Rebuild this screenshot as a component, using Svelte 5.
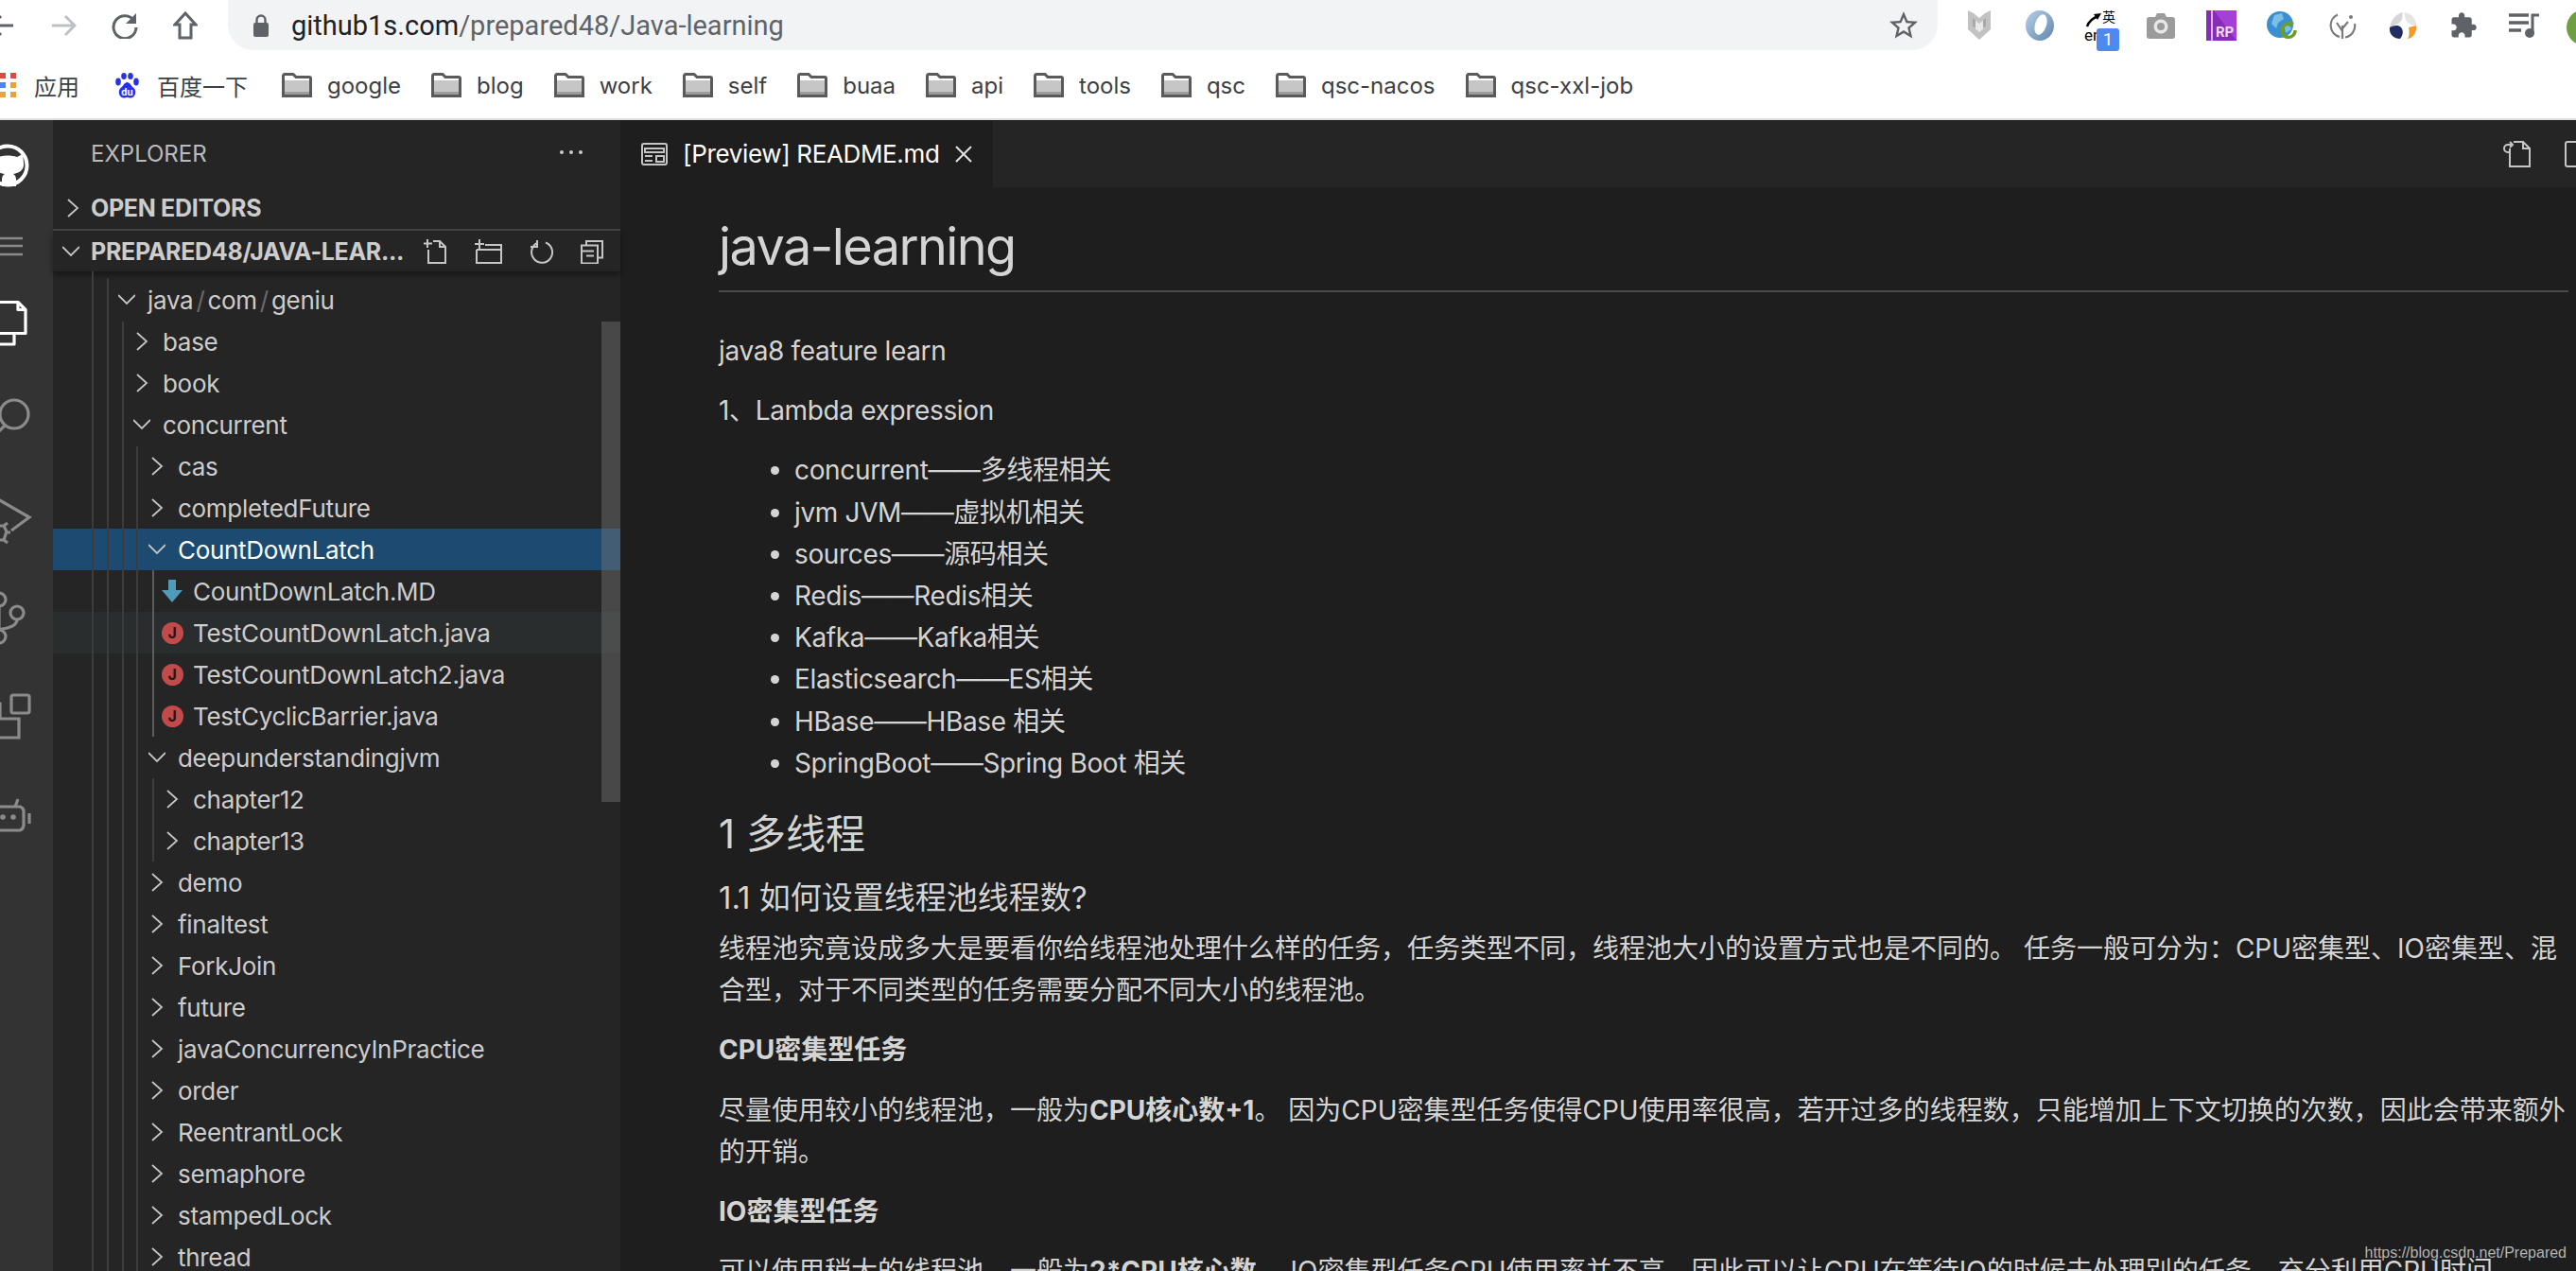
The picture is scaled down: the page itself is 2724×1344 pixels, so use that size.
<script>
  const bookmarks = ["google", "blog", "work", "self", "buaa", "api", "tools", "qsc", "qsc-nacos", "qsc-xxl-job"];

  const tree = [
    { depth: 0, name: "java/com/geniu", kind: "open" },
    { depth: 1, name: "base" },
    { depth: 1, name: "book" },
    { depth: 1, name: "concurrent", kind: "open" },
    { depth: 2, name: "cas" },
    { depth: 2, name: "completedFuture" },
    { depth: 2, name: "CountDownLatch", kind: "open", selected: true },
    { depth: 3, name: "CountDownLatch.MD", kind: "md" },
    { depth: 3, name: "TestCountDownLatch.java", kind: "java", hover: true },
    { depth: 3, name: "TestCountDownLatch2.java", kind: "java" },
    { depth: 3, name: "TestCyclicBarrier.java", kind: "java" },
    { depth: 2, name: "deepunderstandingjvm", kind: "open" },
    { depth: 3, name: "chapter12" },
    { depth: 3, name: "chapter13" },
    { depth: 2, name: "demo" },
    { depth: 2, name: "finaltest" },
    { depth: 2, name: "ForkJoin" },
    { depth: 2, name: "future" },
    { depth: 2, name: "javaConcurrencyInPractice" },
    { depth: 2, name: "order" },
    { depth: 2, name: "ReentrantLock" },
    { depth: 2, name: "semaphore" },
    { depth: 2, name: "stampedLock" },
    { depth: 2, name: "thread" }
  ];

  // indent guides: x inside the sidebar, top/bottom inside the tree
  const guides = [
    { x: 41, top: 0, bottom: 1058 },
    { x: 57, top: 7, bottom: 1058 },
    { x: 73, top: 53, bottom: 1058 },
    { x: 88, top: 185, bottom: 1058 },
    { x: 105, top: 316, bottom: 492, active: true },
    { x: 105, top: 536, bottom: 624 }
  ];

  const bullets = [
    "concurrent——多线程相关",
    "jvm JVM——虚拟机相关",
    "sources——源码相关",
    "Redis——Redis相关",
    "Kafka——Kafka相关",
    "Elasticsearch——ES相关",
    "HBase——HBase 相关",
    "SpringBoot——Spring Boot 相关"
  ];
</script>

<div class="page" lang="zh">
  <header class="browser">
    <div class="toolbar">
      <svg class="nav first" width="28" height="28" viewBox="0 0 28 28"><path d="M26 14H3M13 4 3 14l10 10" /></svg>
      <svg class="nav off" width="28" height="28" viewBox="0 0 28 28"><path d="M2 14h24M16 4l10 10-10 10" /></svg>
      <svg class="nav" width="28" height="28" viewBox="0 0 28 28"><path d="M24 9A12 12 0 1 0 26 16" /><path class="solid" d="M26 1v11H15z" /></svg>
      <svg class="nav" width="26" height="30" viewBox="0 0 26 30"><path d="M13 2 2 14h5v14h12V14h5z" /></svg>

      <div class="omnibox">
        <svg class="lock" width="18" height="26" viewBox="0 0 18 26"><rect x="1" y="10" width="16" height="15" rx="2" fill="#5f6368" /><path d="M4.500 11V7a4.500 4.500 0 0 1 9 0v4" fill="none" stroke="#5f6368" stroke-width="2.400" /></svg>
        <span class="url"><b>github1s.com</b>/prepared48/Java-learning</span>
        <svg class="star" width="36" height="36" viewBox="0 0 24 24"><path fill="#5f6368" d="M22 9.24l-7.19-.62L12 2 9.19 8.63 2 9.24l5.46 4.73L5.82 21 12 17.27 18.18 21l-1.63-7.03L22 9.24zM12 15.4l-3.76 2.27 1-4.28-3.32-2.88 4.38-.38L12 6.1l1.71 4.04 4.38.38-3.32 2.88 1 4.28L12 15.4z" /></svg>
      </div>

      <div class="extensions">
        <div class="ext"><svg width="24" height="32" viewBox="0 0 24 32"><path fill="#c2c2c2" d="M0 0l6 3 6 5 6-5 6-3v20l-12 11L0 20z" /><path fill="#e9e9e9" d="M5 8l7 6 7-6v9l-7 6-7-6z" /><path fill="#a9a9a9" d="M5 8l3 2v9l-3-2zM19 8l-3 2v9l3-2z" /></svg></div>
        <div class="ext"><svg width="32" height="32" viewBox="0 0 32 32"><defs><linearGradient id="ring" x1="0" y1="0" x2="1" y2="1"><stop offset="0" stop-color="#b9cfe6" /><stop offset="1" stop-color="#5f86ad" /></linearGradient></defs><ellipse cx="16" cy="16" rx="15" ry="16" fill="url(#ring)" /><ellipse cx="17" cy="15" rx="6" ry="11" transform="rotate(18 17 15)" fill="#fff" /></svg></div>
        <div class="ext translate">
          <svg width="34" height="38" viewBox="0 0 34 38"><text x="19" y="15" class="t-cn">英</text><text x="0" y="35" class="t-en">en</text><path d="M3 20C5 14 9 11 15 9" fill="none" stroke="#000" stroke-width="2.400" /><path d="M18 6l-8 1 4 6z" /></svg>
          <span class="badge">1</span>
        </div>
        <div class="ext"><svg width="30" height="28" viewBox="0 0 30 28"><path fill="#9b9b9b" d="M3 5h6l2-4h8l2 4h6a3 3 0 0 1 3 3v17a3 3 0 0 1-3 3H3a3 3 0 0 1-3-3V8a3 3 0 0 1 3-3z" /><circle cx="15" cy="15" r="7.500" fill="#e8e8e8" /><circle cx="15" cy="15" r="4" fill="#9b9b9b" /></svg></div>
        <div class="ext"><svg width="32" height="32" viewBox="0 0 32 32"><rect width="32" height="32" fill="#8a2bb8" /><path d="M8 0h24v32z" fill="#a63fd8" /><rect x="5" width="2" height="32" fill="#d9b3ee" /><text x="10" y="28" class="t-rp">RP</text></svg></div>
        <div class="ext"><svg width="32" height="30" viewBox="0 0 32 30"><circle cx="14" cy="14" r="14" fill="#3a8fd1" /><path d="M8 4l8-2 2 6-6 4-2 6-5-5zM18 14l7-1 1 6-6 4z" fill="#7bbfe8" /><path d="M30 20a7 7 0 1 1-4-6" fill="none" stroke="#6d9e22" stroke-width="3.400" /><path d="M22 10l7 2-5 5z" fill="#6d9e22" /></svg></div>
        <div class="ext"><svg width="30" height="30" viewBox="0 0 30 30" fill="none" stroke="#7b7b7b" stroke-width="2.200"><path d="M10 3.500A12.500 12.500 0 0 0 12 27M18 27.500A12.500 12.500 0 0 0 28 13" /><path d="M15 29V15M15 21l-6-9M15 18l6-7" /><circle cx="24" cy="6" r="2" fill="#7b7b7b" stroke="none" /></svg></div>
        <div class="ext"><svg width="30" height="28" viewBox="0 0 30 28"><path d="M15 0C6 2 2 10 1 16c7-3 12-5 13-9 1-3 0-5 1-7z" fill="#d6d6d6" /><path d="M16 0c7 1 13 5 13 14-4 0-9-2-11-6-1-3-1-5-2-8z" fill="#e5e5e5" /><path d="M1 16c4-2 9-3 12 0 3 4 2 8-1 12C6 28 0 24 1 16z" fill="#1f2f5f" /><path d="M29 14c1 7-3 13-9 14 2-3 2-8 1-12z" fill="#ef9a2b" /></svg></div>
        <div class="ext"><svg width="30" height="30" viewBox="0 0 24 24"><path fill="#5f6368" d="M20.5 11H19V7c0-1.1-.9-2-2-2h-4V3.5C13 2.12 11.88 1 10.5 1S8 2.12 8 3.5V5H4c-1.1 0-1.99.9-1.99 2v3.8H3.5c1.49 0 2.7 1.21 2.7 2.7s-1.21 2.7-2.7 2.7H2V20c0 1.1.9 2 2 2h3.8v-1.5c0-1.49 1.21-2.7 2.7-2.7 1.49 0 2.7 1.21 2.7 2.7V22H17c1.1 0 2-.9 2-2v-4h1.5c1.38 0 2.5-1.12 2.5-2.5S21.88 11 20.5 11z" /></svg></div>
        <div class="ext"><svg width="32" height="26" viewBox="0 0 32 26"><path d="M0 2h21M0 10h21M0 18h13" stroke="#5f6368" stroke-width="3.400" /><circle cx="22" cy="21" r="5" fill="#5f6368" /><path d="M25 21V2h7" fill="none" stroke="#5f6368" stroke-width="3" /></svg></div>
        <div class="ext"><span class="avatar"></span></div>
      </div>
    </div>

    <nav class="bookmarks">
      <svg class="apps" width="18" height="26" viewBox="0 0 18 26">
        <rect y="0" width="6" height="6" fill="#dd4b3e" /><rect x="11" y="0" width="6" height="6" fill="#dd4b3e" />
        <rect y="10" width="6" height="6" fill="#4a88ee" /><rect x="11" y="10" width="6" height="6" fill="#e8a33d" />
        <rect y="20" width="6" height="6" fill="#e8a33d" /><rect x="11" y="20" width="6" height="6" fill="#e8a33d" />
      </svg>
      <span class="mark apps-label">应用</span>
      <svg class="baidu" width="25" height="27" viewBox="0 0 25 27">
        <ellipse cx="3" cy="9.500" rx="2.800" ry="4" fill="#2932e1" /><ellipse cx="9" cy="3.500" rx="2.800" ry="3.500" fill="#2932e1" /><ellipse cx="16" cy="3.500" rx="2.800" ry="3.500" fill="#2932e1" /><ellipse cx="22" cy="9.500" rx="2.800" ry="4" fill="#2932e1" />
        <path d="M12.500 10c3 0 4 4 7 6 3 3 2 10-3 10.500-2 .2-3-.8-4-.8s-2 1-4 .8c-5-.5-6-7.500-3-10.500 3-2 4-6 7-6z" fill="#2932e1" />
        <text x="12.500" y="24" class="t-du">du</text>
      </svg>
      <span class="mark baidu-label">百度一下</span>
      {#each bookmarks as b}
        <span class="bookmark">
          <svg width="32" height="26" viewBox="0 0 32 26"><path d="M1.500 24.500V3a1.500 1.500 0 0 1 1.500-1.500h9l3 3h14a1.500 1.500 0 0 1 1.500 1.500v18.500z" fill="#fff" stroke="#5a5a5a" stroke-width="3" /><rect x="3" y="8" width="26" height="15" fill="#c6c6c6" /><rect x="3" y="20" width="26" height="3" fill="#9c9c9c" /></svg>
          <span class="mark">{b}</span>
        </span>
      {/each}
    </nav>
  </header>

  <div class="workbench">
    <aside class="activity">
      <svg width="56" height="1217" viewBox="0 127 56 1217" fill="none">
        <g stroke="#fff" stroke-width="4"><circle cx="8" cy="175" r="20.500" /></g>
        <path fill="#fff" d="M-8 163l6 3c6-2 14-2 20 0l6-3 1 9c1 7-4 11-11 12 2 1 3 3 3 6v7H2v-7c0-3 1-5 3-6-8-1-13-5-12-12z" />
        <g stroke="#8b8b8b" stroke-width="2.600"><path d="M0 252h24M0 260h24M0 269h24" /></g>
        <g stroke="#fff" stroke-width="3.200" stroke-linejoin="round"><path d="M-10 319.500h29l8 8v25H-10z" /><path d="M19 319.500v8h8" /><path d="M15 353v11H-10" /></g>
        <g stroke="#8b8b8b" stroke-width="3.200">
          <circle cx="15" cy="438" r="15" /><path d="M5 450-8 463" />
          <path d="M-2 528 31 547 12 561" />
          <path d="M-4 556h8l3 6-3 9h-8M4 556l4-3M7 563h4M4 571l4 3" />
          <circle cx="18" cy="648" r="7" /><circle cx="-1" cy="634" r="7" /><circle cx="-1" cy="673" r="7" />
          <path d="M18 655c0 7-8 9-16 10-2 0-3 1-3 1M-1 641v25" />
          <rect x="12" y="735" width="19" height="19" rx="2" /><path d="M-4 760h24v20H-4M0 760v-16h-6" />
          <path d="M19 845l-3 8M-6 853h27a6 6 0 0 1 4 4v16a6 6 0 0 1-4 5H-6" /><path d="M31 860v11" />
        </g>
        <circle cx="3" cy="864" r="2.800" fill="#8b8b8b" /><circle cx="14" cy="864" r="2.800" fill="#8b8b8b" />
      </svg>
    </aside>

    <section class="sidebar">
      <div class="title">
        <span>EXPLORER</span>
        <span class="dots"><i></i><i></i><i></i></span>
      </div>
      <div class="section editors">
        <svg class="chev" width="18" height="22" viewBox="0 0 18 22"><path d="M4 2l10 9-10 9" /></svg>
        <span>OPEN EDITORS</span>
      </div>
      <div class="section repo">
        <svg class="chev" width="18" height="22" viewBox="0 0 18 22"><path d="M0 6l9 9 9-9" /></svg>
        <span class="repo-name">PREPARED48/JAVA-LEAR...</span>
        <span class="repo-actions">
          <svg width="26" height="26" viewBox="0 0 26 26"><path d="M11 2h7l6 6v17H6V11M18 2v6h6M5 0v9M1 4.500h9" /></svg>
          <svg width="30" height="26" viewBox="0 0 30 26"><path d="M12 6h17v19H3V11M3 11h26M6 0v10M1 5h10" /></svg>
          <svg width="26" height="26" viewBox="0 0 26 26"><path d="M9 4A11 11 0 1 0 18 3.500M9 1v7H2" /></svg>
          <svg width="26" height="26" viewBox="0 0 26 26"><path d="M7 5V1.500h17V19h-4M2 6h17v19H2zM2 12h13M7 17h8" transform="translate(0 .5)" /></svg>
        </span>
      </div>

      <div class="tree">
        {#each guides as g}
          <span class="guide" class:active={g.active} style="left:{g.x}px;top:{g.top}px;height:{g.bottom - g.top}px"></span>
        {/each}
        {#each tree as row}
          <div class="row" class:selected={row.selected} class:hover={row.hover} style="padding-left:{64 + 16 * row.depth}px">
            <span class="twist">
              {#if row.kind === "open"}
                <svg class="chev" width="18" height="22" viewBox="0 0 18 22"><path d="M0 6l9 9 9-9" /></svg>
              {:else if row.kind === "md"}
                <svg width="22" height="24" viewBox="0 0 22 24"><path fill="#519aba" d="M7 0h8v11h7L11 24 0 11h7z" /></svg>
              {:else if row.kind === "java"}
                <span class="java">J</span>
              {:else}
                <svg class="chev" width="18" height="22" viewBox="0 0 18 22"><path d="M4 2l10 9-10 9" /></svg>
              {/if}
            </span>
            {#if row.name.includes("/")}
              <span>java<i class="sep">/</i>com<i class="sep">/</i>geniu</span>
            {:else}
              <span>{row.name}</span>
            {/if}
          </div>
        {/each}
        <span class="scrollbar"></span>
      </div>
    </section>

    <main class="editor">
      <div class="tabs">
        <div class="tab">
          <svg width="28" height="24" viewBox="0 0 28 24" fill="none" stroke="#c5c5c5" stroke-width="2"><rect x="1" y="1" width="26" height="22" rx="2" /><path d="M4 6h20v4H4zM4 14h8M4 19h8" /><rect x="16" y="14" width="8" height="6" /></svg>
          <span>[Preview] README.md</span>
          <svg class="close" width="20" height="18" viewBox="0 0 20 18"><path d="M2 1l16 16M18 1 2 17" /></svg>
        </div>
        <div class="tab-actions">
          <svg width="30" height="28" viewBox="0 0 30 28" fill="none" stroke="#c5c5c5" stroke-width="2"><path d="M8 8v19h21V8l-7-7H12M22 1v7h7" /><path d="M9 12H6a4 4 0 0 1 0-8h5M8 1l3 3-3 3" /></svg>
          <svg width="30" height="28" viewBox="0 0 30 28" fill="none" stroke="#c5c5c5" stroke-width="2"><rect x="1" y="1" width="30" height="26" rx="2" /></svg>
        </div>
      </div>

      <article class="preview">
        <h1>java-learning</h1>
        <p class="latin">java8 feature learn</p>
        <p class="latin">1、Lambda expression</p>
        <ul class="latin">
          {#each bullets as li}
            <li>{li}</li>
          {/each}
        </ul>
        <h2>1 多线程</h2>
        <h3>1.1 如何设置线程池线程数?</h3>
        <p>线程池究竟设成多大是要看你给线程池处理什么样的任务，任务类型不同，线程池大小的设置方式也是不同的。 任务一般可分为：CPU密集型、IO密集型、混合型，对于不同类型的任务需要分配不同大小的线程池。</p>
        <p><strong>CPU密集型任务</strong></p>
        <p>尽量使用较小的线程池，一般为<strong>CPU核心数+1</strong>。 因为CPU密集型任务使得CPU使用率很高，若开过多的线程数，只能增加上下文切换的次数，因此会带来额外的开销。</p>
        <p><strong>IO密集型任务</strong></p>
        <p>可以使用稍大的线程池，一般为<strong>2*CPU核心数</strong>。 IO密集型任务CPU使用率并不高，因此可以让CPU在等待IO的时候去处理别的任务，充分利用CPU时间。</p>
      </article>
      <span class="watermark">https://blog.csdn.net/Prepared</span>
    </main>
  </div>
</div>

<style>
  :global(body) {
    margin: 0;
    background: #1e1e1e;
  }

  .page {
    width: 2724px;
    height: 1344px;
    overflow: hidden;
    display: flex;
    flex-direction: column;
    font-family: Roboto, "Noto Sans CJK SC", sans-serif;
  }

  /* browser chrome */
  .browser {
    height: 127px;
    flex: none;
    background: #fff;
    box-shadow: inset 0 -2px #e0e0e0;
  }

  .toolbar {
    height: 53px;
    display: flex;
    align-items: center;
    margin-left: -12px;
  }

  .nav {
    flex: none;
    margin-right: 37px;
    fill: none;
    stroke: #5f6368;
    stroke-width: 3;
  }

  .nav.off {
    stroke: #bdc1c6;
  }

  .nav .solid {
    fill: #5f6368;
    stroke: none;
  }

  .omnibox {
    flex: none;
    width: 1808px;
    height: 53px;
    margin-left: -5px;
    border-radius: 0 0 27px 27px / 0 0 27px 27px;
    background: #f1f3f4;
    display: flex;
    align-items: center;
    padding-left: 26px;
    box-sizing: border-box;
  }

  .lock {
    flex: none;
    margin-right: 23px;
  }

  .url {
    flex: 1;
    font-size: 29px;
    color: #5f6368;
  }

  .url b {
    font-weight: 400;
    color: #202124;
  }

  .star {
    flex: none;
    margin-right: 18px;
  }

  .extensions {
    flex: none;
    display: flex;
    margin-left: 12px;
  }

  .ext {
    flex: none;
    width: 64px;
    height: 53px;
    display: flex;
    align-items: center;
    justify-content: center;
    position: relative;
  }

  .t-cn {
    font: 14px "Noto Sans CJK SC", sans-serif;
  }

  .t-en {
    font: 17px Roboto, sans-serif;
  }

  .t-rp {
    font: 700 15px Roboto, sans-serif;
    fill: #f2dcfb;
  }

  .t-du {
    font: 700 11px Roboto, sans-serif;
    fill: #fff;
    text-anchor: middle;
  }

  .badge {
    position: absolute;
    left: 28px;
    top: 30px;
    width: 24px;
    height: 24px;
    border-radius: 3px;
    background: #4f88ee;
    color: #fff;
    font-size: 19px;
    line-height: 24px;
    text-align: center;
  }

  .avatar {
    width: 38px;
    height: 38px;
    border-radius: 50%;
    background: #6f9e45;
    flex: none;
    margin-top: 4px;
  }

  .bookmarks {
    height: 50px;
    display: flex;
    align-items: center;
    margin-top: 12px;
    font-family: Inter, "Noto Sans CJK SC", sans-serif;
    font-size: 24px;
    color: #3c4043;
  }

  .mark {
    white-space: nowrap;
  }

  .apps {
    flex: none;
    margin-right: 18px;
  }

  .apps-label {
    margin-right: 38px;
  }

  .baidu {
    flex: none;
    margin-right: 19px;
  }

  .baidu-label {
    margin-right: 36px;
  }

  .bookmark {
    flex: none;
    display: flex;
    align-items: center;
    gap: 16px;
    margin-right: 32px;
  }

  /* workbench */
  .workbench {
    flex: 1;
    display: flex;
    min-height: 0;
  }

  .activity {
    width: 56px;
    flex: none;
    background: #333;
    overflow: hidden;
  }

  .activity svg {
    display: block;
  }

  .sidebar {
    width: 600px;
    flex: none;
    background: #252526;
    color: #ccc;
    font-family: Inter, "Noto Sans CJK SC", sans-serif;
    display: flex;
    flex-direction: column;
    min-height: 0;
  }

  .title {
    height: 71px;
    flex: none;
    padding: 0 40px;
    display: flex;
    align-items: center;
    justify-content: space-between;
    font-size: 24px;
    color: #bbb;
  }

  .dots {
    display: flex;
    gap: 6px;
    margin-bottom: 4px;
  }

  .dots i {
    width: 4px;
    height: 4px;
    border-radius: 50%;
    background: #ccc;
  }

  .section {
    flex: none;
    display: flex;
    align-items: center;
    font-size: 25px;
    font-weight: 700;
    letter-spacing: -0.3px;
  }

  .editors {
    height: 44px;
    padding-left: 12px;
    gap: 10px;
    border-bottom: 2px solid #434343;
  }

  .repo {
    height: 43px;
    padding-left: 10px;
    gap: 12px;
    z-index: 1;
    box-shadow: 0 4px 6px #0006;
  }

  .repo-name {
    width: 339px;
    flex: none;
    white-space: nowrap;
  }

  .repo-actions {
    display: flex;
    gap: 28px;
    fill: none;
    stroke: #c5c5c5;
    stroke-width: 2;
  }

  .repo-actions svg {
    flex: none;
  }

  .chev {
    flex: none;
    fill: none;
    stroke: #c5c5c5;
    stroke-width: 1.800;
  }

  .tree {
    flex: 1;
    min-height: 0;
    overflow: hidden;
    position: relative;
    padding-top: 8px;
    font-size: 26px;
    letter-spacing: -0.3px;
  }

  .guide {
    position: absolute;
    width: 2px;
    background: #3c3c3c;
    z-index: 1;
  }

  .guide.active {
    background: #5c5c5c;
  }

  .row {
    height: 44px;
    display: flex;
    align-items: center;
    white-space: nowrap;
  }

  .row.selected {
    background: #1c4a70;
    color: #fff;
  }

  .row.hover {
    background: #2a2d2e;
  }

  .twist {
    flex: none;
    width: 28px;
    margin-right: 8px;
    display: flex;
    align-items: center;
    justify-content: center;
    position: relative;
    z-index: 2;
  }

  .java {
    width: 23px;
    height: 23px;
    border-radius: 50%;
    background: #c24a4a;
    color: #2a1515;
    font-size: 16px;
    font-weight: 700;
    line-height: 23px;
    text-align: center;
  }

  .sep {
    font-style: normal;
    color: #6a6a6a;
    margin: 0 3px;
  }

  .scrollbar {
    position: absolute;
    right: 0;
    top: 53px;
    width: 20px;
    height: 508px;
    background: #7979796b;
    z-index: 3;
  }

  .editor {
    flex: 1;
    min-width: 0;
    background: #1e1e1e;
    display: flex;
    flex-direction: column;
    position: relative;
    color: #d4d4d4;
  }

  .tabs {
    height: 71px;
    flex: none;
    background: #252526;
    display: flex;
    justify-content: space-between;
  }

  .tab {
    width: 394px;
    box-sizing: border-box;
    background: #1e1e1e;
    color: #fff;
    display: flex;
    align-items: center;
    padding-left: 22px;
    font-family: Inter, "Noto Sans CJK SC", sans-serif;
    font-size: 26px;
    letter-spacing: -0.35px;
    white-space: nowrap;
  }

  .tab > svg:first-child {
    flex: none;
    margin-right: 16px;
  }

  .close {
    flex: none;
    margin-left: 16px;
    stroke: #e0e0e0;
    stroke-width: 2;
  }

  .tab-actions {
    display: flex;
    gap: 36px;
    align-items: center;
    margin-right: -18px;
  }

  .preview {
    padding: 27px 8px 0 104px;
    font-size: 28px;
    line-height: 44.200px;
    font-family: Inter, "Noto Sans CJK SC", sans-serif;
  }

  .preview h1 {
    margin: 0 0 40px;
    font-size: 54px;
    font-weight: 400;
    letter-spacing: -1.600px;
    line-height: 72px;
    padding-bottom: 10px;
    border-bottom: 2px solid #4a4a4a;
  }

  .preview p {
    margin: 0 0 19px;
  }

  .preview .latin {
    letter-spacing: -0.350px;
  }

  .preview ul {
    margin: 1px 0 0;
    padding-left: 80px;
  }

  .preview h2 {
    margin: 28px 0 22px;
    font-size: 42px;
    font-weight: 400;
    line-height: 50px;
  }

  .preview h3 {
    margin: 0 0 12px;
    font-size: 33px;
    font-weight: 400;
    line-height: 40px;
  }

  .preview strong {
    font-weight: 700;
  }

  .watermark {
    position: absolute;
    right: 10px;
    bottom: 10px;
    font-family: "Liberation Sans", sans-serif;
    font-size: 16px;
    color: #b4b4b4;
  }
</style>
